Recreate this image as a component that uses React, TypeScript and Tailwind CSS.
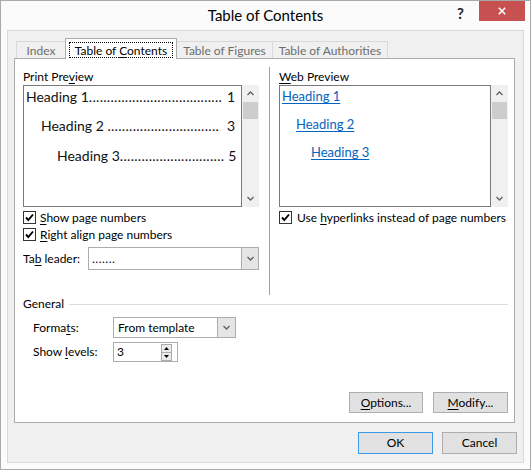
import React from "react";

function ChevUp() {
  return (
    <svg width="7" height="5" viewBox="0 0 7 5">
      <path d="M0.5 4 L3.5 1 L6.5 4" stroke="#606060" strokeWidth="1.3" fill="none" />
    </svg>
  );
}
function ChevDown({ color = "#606060" }: { color?: string }) {
  return (
    <svg width="7" height="5" viewBox="0 0 7 5">
      <path d="M0.5 1 L3.5 4 L6.5 1" stroke={color} strokeWidth="1.3" fill="none" />
    </svg>
  );
}

function ScrollBar() {
  return (
    <div className="w-[17px] h-full bg-[#f0f0f0] flex flex-col">
      <div className="h-[17px] flex items-center justify-center">
        <ChevUp />
      </div>
      <div className="h-[17px] mx-px bg-[#cdcdcd]" />
      <div className="flex-1" />
      <div className="h-[17px] flex items-center justify-center">
        <ChevDown />
      </div>
    </div>
  );
}

function Check() {
  return (
    <span className="w-[13px] h-[13px] border border-[#333333] bg-white flex items-center justify-center shrink-0">
      <svg width="9" height="9" viewBox="0 0 9 9">
        <path d="M1 4.5 L3.3 7 L8 1.5" stroke="#000" strokeWidth="1.9" fill="none" />
      </svg>
    </span>
  );
}

function U({ children }: { children: React.ReactNode }) {
  return <span className="underline underline-offset-2 decoration-1">{children}</span>;
}

function Leader({ label, num, pl, dots }: { label: string; num: string; pl: string; dots: number }) {
  return (
    <div className={`flex h-[20px] items-center justify-between whitespace-nowrap ${pl} pr-[6px]`}>
      <span>
        {label}
        <span className="tracking-[0.3px]">{".".repeat(dots)}</span>
      </span>
      <span className="pl-[4px]">{num}</span>
    </div>
  );
}

function Btn({ children, w, def = false, h = "h-[21px]" }: { children: React.ReactNode; w: string; def?: boolean; h?: string }) {
  return (
    <div
      className={`${w} ${h} bg-[#e1e1e1] border ${def ? "border-[#3c9ae6]" : "border-[#adadad]"} flex items-center justify-center`}
    >
      {children}
    </div>
  );
}

export default function App() {
  return (
    <div className="w-[531px] h-[470px] border border-[#aaaaaa] bg-[#fbfbfb] flex flex-col font-['Lato',sans-serif] text-[12px] text-black">
      {/* title bar */}
      <div className="h-[29px] grid grid-cols-[1fr_auto_1fr]">
        <div />
        <div className="text-[15px] leading-[29px] text-black">Table of Contents</div>
        <div className="flex justify-end items-start">
          <div className="mt-[4px] mr-[15px] text-[15px] font-bold leading-[16px] text-[#222]">?</div>
          <div className="w-[46px] h-[20px] bg-[#c75050] mr-[5px] flex items-center justify-center">
            <svg width="8" height="8" viewBox="0 0 8 8">
              <path d="M0.8 0.8 L7.2 7.2 M7.2 0.8 L0.8 7.2" stroke="#fff" strokeWidth="1.6" />
            </svg>
          </div>
        </div>
      </div>

      {/* inner frame */}
      <div className="mx-[6px] h-[433px] border border-[#d9d9d9] bg-[#f0f0f0] flex flex-col pl-[6px] pt-[7px]">
        {/* tabs */}
        <div className="flex items-end h-[21px] pl-[2px]">
          <div className="w-[50px] h-[17px] mb-px pt-[2px] border-t border-l border-r border-[#d9d9d9] bg-[#f0f0f0] text-[#6d6d6d] flex items-center justify-center">
            Index
          </div>
          <div className="-ml-px w-[112px] h-[21px] border-t border-l border-r border-[#acacac] bg-white relative z-10 flex items-start justify-center pt-[3px]">
            <span className="border border-dotted border-black px-[5px] h-[16px] leading-[15px]">
              Table of <U>C</U>ontents
            </span>
          </div>
          <div className="-ml-px w-[97px] h-[17px] mb-px pt-[2px] border-t border-l border-r border-[#d9d9d9] bg-[#f0f0f0] text-[#6d6d6d] flex items-center justify-center">
            Table of Figures
          </div>
          <div className="w-[115px] h-[17px] mb-px pt-[2px] border-t border-r border-[#d9d9d9] bg-[#f0f0f0] text-[#6d6d6d] flex items-center justify-center">
            Table of Authorities
          </div>
        </div>

        {/* panel */}
        <div className="-mt-px w-[501px] h-[365px] bg-white border border-[#acacac] flex flex-col">
          <div className="flex h-[236px] pt-[8px]">
            {/* left column */}
            <div className="w-[254px] pl-[8px] pt-[2px] flex flex-col">
              <div className="h-[16px] leading-[16px]">
                Print Pre<U>v</U>iew
              </div>
              <div className="h-[122px] flex">
                <div className="w-[219px] h-full border border-[#7a7a7a] text-[14px] text-[#111]">
                  <Leader label="Heading 1" num="1" pl="pl-[2px]" dots={37} />
                  <div className="mt-[9px]">
                    <Leader label="Heading 2 " num="3" pl="pl-[17px]" dots={31} />
                  </div>
                  <div className="mt-[10px]">
                    <Leader label="Heading 3" num="5" pl="pl-[33px]" dots={29} />
                  </div>
                </div>
                <ScrollBar />
              </div>
              <div className="mt-[2px] h-[17px] flex items-center gap-[4px]">
                <Check />
                <span>
                  <U>S</U>how page numbers
                </span>
              </div>
              <div className="h-[17px] flex items-center gap-[4px]">
                <Check />
                <span>
                  <U>R</U>ight align page numbers
                </span>
              </div>
              <div className="mt-[4px] h-[23px] flex items-center">
                <span className="w-[65px]">
                  Ta<U>b</U> leader:
                </span>
                <div className="w-[171px] h-[23px] border border-[#acacac] flex">
                  <div className="flex-1 pl-[3px] flex items-center tracking-[0.5px]">.......</div>
                  <div className="w-[17px] bg-[#e5e5e5] border-l border-[#acacac] flex items-center justify-center">
                    <ChevDown />
                  </div>
                </div>
              </div>
            </div>

            {/* separator */}
            <div className="w-px bg-[#a0a0a0]" />

            {/* right column */}
            <div className="pl-[9px] pt-[2px] flex flex-col">
              <div className="h-[16px] leading-[16px]">
                <U>W</U>eb Preview
              </div>
              <div className="h-[122px] flex">
                <div className="w-[212px] h-full border border-[#7a7a7a] text-[13px] text-[#0563c1]">
                  <div className="h-[20px] leading-[20px] pl-[2px]">
                    <span className="underline underline-offset-2">Heading 1</span>
                  </div>
                  <div className="mt-[8px] h-[20px] leading-[20px] pl-[16px]">
                    <span className="underline underline-offset-2">Heading 2</span>
                  </div>
                  <div className="mt-[8px] h-[20px] leading-[20px] pl-[31px]">
                    <span className="underline underline-offset-2">Heading 3</span>
                  </div>
                </div>
                <ScrollBar />
              </div>
              <div className="mt-[2px] h-[17px] flex items-center gap-[5px]">
                <Check />
                <span>
                  Use <U>h</U>yperlinks instead of page numbers
                </span>
              </div>
            </div>
          </div>

          {/* General */}
          <div className="mt-px h-[16px] flex items-center pl-[8px] pr-[6px]">
            <span>General</span>
            <div className="flex-1 h-px bg-[#dcdcdc] ml-[5px]" />
          </div>
          <div className="mt-[5px] h-[21px] flex items-center pl-[18px]">
            <span className="w-[80px]">
              Forma<U>t</U>s:
            </span>
            <div className="w-[123px] h-[21px] border border-[#acacac] flex">
              <div className="flex-1 pl-[4px] flex items-center">From template</div>
              <div className="w-[18px] bg-[#e5e5e5] border-l border-[#acacac] flex items-center justify-center">
                <ChevDown />
              </div>
            </div>
          </div>
          <div className="mt-[4px] h-[20px] flex items-center pl-[18px]">
            <span className="w-[80px]">
              Show <U>l</U>evels:
            </span>
            <div className="w-[65px] h-[20px] border border-[#acacac] flex items-center">
              <div className="flex-1 pl-[3px]">3</div>
              <div className="w-[11px] h-[17px] mr-[5px] flex flex-col border border-[#acacac] bg-[#ececec]">
                <div className="flex-1 flex items-center justify-center border-b border-[#acacac]">
                  <svg width="5" height="3" viewBox="0 0 5 3">
                    <path d="M0 3 L2.5 0 L5 3 Z" fill="#000" />
                  </svg>
                </div>
                <div className="flex-1 flex items-center justify-center">
                  <svg width="5" height="3" viewBox="0 0 5 3">
                    <path d="M0 0 L2.5 3 L5 0 Z" fill="#000" />
                  </svg>
                </div>
              </div>
            </div>
          </div>

          <div className="mt-[30px] flex justify-end gap-[10px] pr-[6px]">
            <Btn w="w-[74px]">
              <span>
                <U>O</U>ptions...
              </span>
            </Btn>
            <Btn w="w-[75px]">
              <span>
                <U>M</U>odify...
              </span>
            </Btn>
          </div>
        </div>

        {/* OK / Cancel */}
        <div className="mt-[9px] mr-[6px] flex justify-end gap-[9px]">
          <Btn w="w-[75px]" h="h-[22px]" def>
            OK
          </Btn>
          <Btn w="w-[75px]" h="h-[22px]">
            Cancel
          </Btn>
        </div>
      </div>
    </div>
  );
}
